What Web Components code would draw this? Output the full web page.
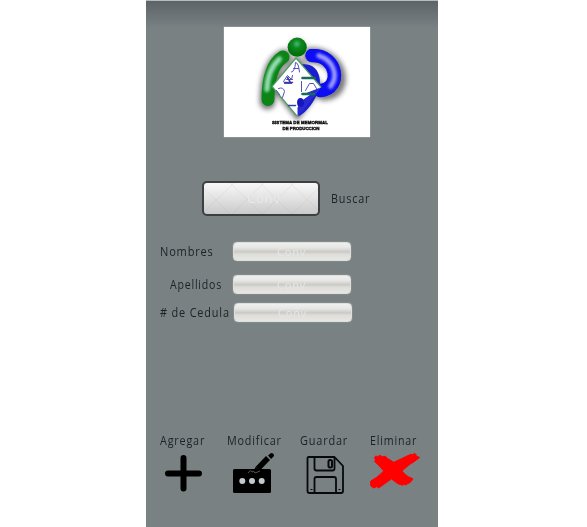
<!DOCTYPE html>
<html lang="es"><head><meta charset="utf-8"><title>Registro</title>
<style>html,body{margin:0;background:#fff}body{font-family:"Open Sans","Noto Sans",sans-serif}</style></head>
<body><registry-screen></registry-screen>
<script>
const define=(name,html)=>customElements.define(name,class extends HTMLElement{
  constructor(){super();const t=document.createElement('template');t.innerHTML=html;
  this.attachShadow({mode:'open'}).append(t.content.cloneNode(true));}
});
define('brand-logo',`<style>:host{display:block;width:146px;height:110px;background:#fff;box-shadow:0 0 1px #dfe3e3}svg{display:block}</style>
<svg width="146" height="110" viewBox="223.5 26.5 146 110">
<defs>
<radialGradient id="g" cx=".48" cy=".33" r=".6"><stop offset="0" stop-color="#48b878"/><stop offset=".4" stop-color="#0a861c"/><stop offset="1" stop-color="#006f0c"/></radialGradient>
<filter id="s" x="-30%" y="-30%" width="160%" height="160%"><feGaussianBlur stdDeviation="2.800"/></filter>
<filter id="h" x="-50%" y="-30%" width="200%" height="160%"><feGaussianBlur stdDeviation="1.4"/></filter>
<filter id="b"><feGaussianBlur stdDeviation=".6"/></filter>
</defs>
<g filter="url(#s)" opacity=".6" fill="none" stroke="#222" stroke-linecap="round"><path d="M283 57Q267 65 267 101" stroke-width="16"/><path d="M311 55C341 55 346 93 323 92" stroke-width="16"/><path d="M297 60L319 86L297 115L274 86Z" stroke-width="7"/><circle cx="297" cy="47" r="8"/></g>
<g filter="url(#b)" fill="none" stroke-linecap="round">
<path d="M282.500 56.500Q267.500 66 267.500 99" stroke="#078414" stroke-width="13"/>
<path d="M279 58.500Q267 69 266.500 89" stroke="#9ae0b8" stroke-width="5" filter="url(#h)"/>
<path d="M301 64C316 62 321 75 319 87C315 100 307 111 298 116L296 80Z" fill="#1c1cd0"/>
<path d="M311.500 55C337 54 342 88 320 90" stroke="#0808f4" stroke-width="13.500"/>
<path d="M318 55C334 60 338 76 330 86" stroke="#a6a6ff" stroke-width="4.500" filter="url(#h)"/>
<path d="M295.500 57.500L320.500 86.500L296.500 115.500L271.500 86Z" fill="#fff"/>
<path d="M320 87L302 94L310 94L303 99L297 107L297 115.500L303 110Z" fill="#2a2ad2"/>
<path d="M320.500 86.500L295.500 57.500L271.500 86L296 115" stroke="#4d9d60" stroke-width="1.200"/>
<path d="M302 77.500H314M302 93.500H314" stroke="#176c58" stroke-width="2.600"/>
<path d="M291 71.500Q294.500 71 295 62Q298 62 299 71.500M293 68H298M283 81L287 75L291 79L292 75M284 83H291M286 79H292M278 88Q283 86 284 91L282 97M276 90L279 94M301 81V91M305 90L309 83L313 83L316 88" stroke="#5252b5" stroke-width="1"/>
<path d="M284 82H292M287 77L290 82M288 105H295" stroke="#3939a8" stroke-width="1.600" stroke-dasharray="2 1"/>
<ellipse cx="300" cy="102" rx="3.400" ry="4.500" fill="#1717bd"/>
</g>
<circle cx="296.700" cy="46.700" r="9.600" fill="url(#g)" filter="url(#b)"/>
<g font-family="Liberation Sans, sans-serif" font-weight="700" font-size="4.400" fill="#111" stroke="#111" stroke-width=".4" filter="url(#b)"><text x="271.500" y="123" textLength="56">SISTEMA DE MEMORMAL</text><text x="282" y="129.500" textLength="37">DE PRODUCCION</text></g>
</svg>`);
define('field-label',`<style>:host{display:block;white-space:nowrap;font-size:12px;line-height:17px;letter-spacing:.9px;color:#1c2125;transform:scaleX(var(--narrow,.9));transform-origin:0 50%;filter:blur(.45px)}</style><slot></slot>`);
define('text-field',`<style>:host{display:block;box-sizing:border-box;width:118px;height:19px;border-radius:4px;border:1px solid #dededc;background:linear-gradient(#efefed,#e6e6e4 28%,#c9c9c6 52%,#deddda 65%,#e6e6e3);box-shadow:0 0 1px #dadada;text-align:center;font-size:11px;line-height:17px;letter-spacing:.8px;color:#e6e6e4;overflow:hidden;filter:blur(.4px)}div{filter:blur(.3px)}</style><div><slot></slot></div>`);
define('search-button',`<style>:host{display:block;box-sizing:border-box;width:118px;height:35px;border:2px solid #3c4042;border-radius:5px;background:linear-gradient(#f8f8f8,#e2e2e2 50%,#cacaca);overflow:hidden;filter:blur(.4px)}svg{display:block}text{font:13px "Open Sans";fill:#e9e9e9;letter-spacing:.8px}</style><svg width="114" height="31"><path d="M-10 -4L30 35M22 -4L62 35M52 -4L92 35M82 -4L122 35M34 -4L-6 35M64 -4L24 35M94 -4L54 35M124 -4L84 35" stroke="#a5a5a5" stroke-opacity=".16" fill="none"/><text x="43" y="20">Conv</text></svg>`);
define('tool-action',`<style>:host{display:grid;grid-template-rows:17px 42px;row-gap:4px;justify-items:start}.i{margin-left:var(--shift,0px);display:block}</style><field-label><slot></slot></field-label><div class="i"><slot name="icon"></slot></div>`);
define('plus-icon',`<style>:host{display:block;filter:blur(.45px)}svg{display:block}</style><svg width="40" height="42"><path d="M19.500 5V35.500M4 20.500H35" stroke="#000" stroke-width="6" stroke-linecap="round"/></svg>`);
define('edit-icon',`<style>:host{display:block;filter:blur(.45px)}svg{display:block;overflow:visible}</style><svg width="44" height="42"><rect x="3" y="16" width="38" height="24" rx="1.500"/><path d="M27.500 16L38 5" stroke="#000" stroke-width="5.500"/><path d="M38 2.500L41 0Q44 0 44 3L41 6ZM25.500 14L29.500 18L22.500 20Z"/><path d="M18 20Q21 16 22 19Q24 17 25 20L30 18" fill="none" stroke="#777" stroke-width=".7"/><g fill="#c3cbcc"><circle cx="12.300" cy="28" r="3"/><circle cx="22" cy="28" r="3"/><circle cx="31.700" cy="28" r="3"/></g></svg>`);
define('save-icon',`<style>:host{display:block;filter:blur(.4px)}svg{display:block}</style><svg width="40" height="42" fill="none" stroke="#07090a" stroke-width="1.800" stroke-linejoin="round"><g transform="translate(-.5 1)"><path d="M3 3H29L37.500 12V37Q37.500 39 35.500 39H4Q2 39 2 37V4.500Q2 3 3 3ZM9 3V14.500Q9 16.500 11 16.500H27Q29 16.500 29 14.500V3M9 39V25Q9 23 11 23H28.500Q30.500 23 30.500 25V39"/><rect x="23" y="6" width="3.500" height="7.500" rx="1.500" stroke-width="2"/><path d="M5 35.500H7M33 35.500H35" stroke-width="1"/></g></svg>`);
define('delete-icon',`<style>:host{display:block;filter:blur(.4px)}svg{display:block;overflow:visible}</style><svg width="52" height="42"><path fill="#f00" stroke="#f00" stroke-width="3" stroke-linejoin="round" transform="translate(.2 .3) scale(.327 .333)" d="M13 15L17 8L23 10L29 6L37 10L46 9L54 16L72 27L92 18L108 10L125 3L130 4L136 0L141 5L140 9L151 12L145 18L141 19L138 23L120 34L97 53L109 65L118 71L130 76L128 81L122 88L115 91L110 95L104 93L99 96L84 91L65 77L45 91L26 104L20 100L11 104L2 98L1 90L2 83L20 72L32 62L41 53L28 38L13 24L17 20Z"/></svg>`);
define('registry-screen',`<style>
:host{display:flex;flex-direction:column;box-sizing:border-box;width:292px;height:527px;margin-left:146px;background:linear-gradient(#b7bbbc 0 1px,#5d6468 1px,#6d7579 17px,#788083 27px,#798183 28px);overflow:hidden}
brand-logo{margin:26.500px 0 0 77.500px}
.row{display:flex;align-items:center}.search{margin:44px 0 0 56px;gap:11px}
.form{display:grid;grid-template-columns:73px 118px;grid-template-rows:19px 19px 19px;row-gap:14px;margin:26px 0 0 13.500px;align-items:center}
.form .last{margin-top:-10px}
.tools{display:grid;grid-template-columns:67px 73px 70px 60px;margin:105px 0 0 13.500px}
</style>
<brand-logo></brand-logo>
<div class="row search"><search-button></search-button><field-label>Buscar</field-label></div>
<div class="form"><field-label style="--narrow:.92">Nombres</field-label><text-field>Conv</text-field>
<field-label style="margin-left:10.500px;--narrow:.88">Apellidos</field-label><text-field>Conv</text-field>
<field-label class="last" style="--narrow:.91">#&nbsp;de Cedula</field-label><text-field class="last" style="margin-left:1px">Conv</text-field></div>
<div class="tools"><tool-action style="--shift:4px">Agregar<plus-icon slot="icon"></plus-icon></tool-action><tool-action style="--shift:3px">Modificar<edit-icon slot="icon"></edit-icon></tool-action><tool-action style="--shift:6px;--narrow:.91">Guardar<save-icon slot="icon"></save-icon></tool-action><tool-action style="--narrow:.89">Eliminar<delete-icon slot="icon"></delete-icon></tool-action></div>`);
</script></body></html>
